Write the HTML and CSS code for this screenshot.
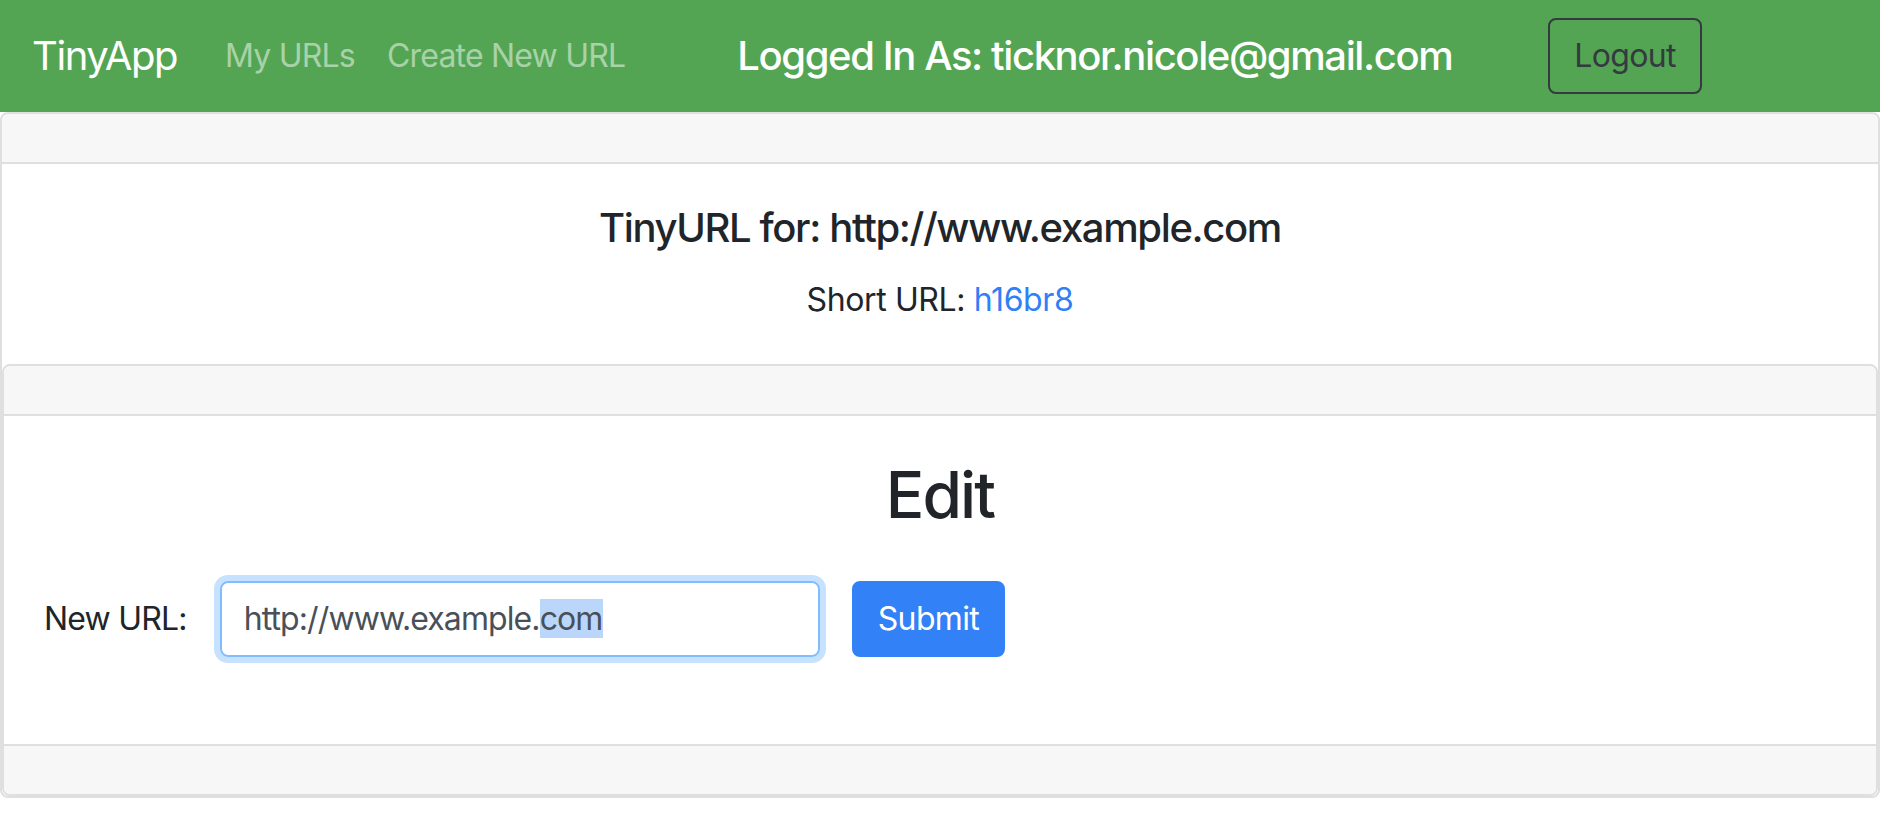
FILE: index.html
```html
<!DOCTYPE html>
<html lang="en">
<head>
<meta charset="utf-8">
<title>TinyApp</title>
<link rel="stylesheet" href="styles.css">
</head>
<body>
<nav class="navbar">
  <a class="brand" href="#">TinyApp</a>
  <ul class="nav">
    <li><a class="nav-link" href="#">My URLs</a></li>
    <li><a class="nav-link" href="#">Create New URL</a></li>
  </ul>
  <h5 class="user">Logged In As: ticknor.nicole@gmail.com</h5>
  <button class="btn-logout" type="button">Logout</button>
</nav>
<main class="card outer">
  <div class="card-header"></div>
  <div class="card-body centered">
    <h5 class="card-title">TinyURL for: http://www.example.com</h5>
    <p class="card-text">Short URL: <a class="link" href="#">h16br8</a></p>
  </div>
  <div class="card inner">
    <div class="card-header"></div>
    <div class="card-body">
      <h2 class="edit-title">Edit</h2>
      <form class="form-inline">
        <label class="form-label">New URL:</label>
        <div class="form-control"><span>http://www.example.</span><span class="sel">com</span></div>
        <button class="btn-primary" type="button">Submit</button>
      </form>
    </div>
    <div class="card-footer"></div>
  </div>
</main>
</body>
</html>
```

FILE: styles.css
```css
* { box-sizing: border-box; }
html, body { margin: 0; padding: 0; }
body {
  font-family: Inter, "Liberation Sans", Arial, sans-serif;
  font-size: 32px;
  line-height: 1.5;
  letter-spacing: -0.012em;
  color: #212529;
  background: #ffffff;
}
.navbar {
  display: flex;
  align-items: center;
  height: 112px;
  padding: 16px 32px;
  background: #53a553;
}
.brand {
  color: #ffffff;
  font-size: 40px;
  line-height: 60px;
  letter-spacing: -0.035em;
  padding: 10px 0;
  margin-right: 32px;
  text-decoration: none;
}
.nav {
  display: flex;
  list-style: none;
  margin: 0;
  padding: 0;
}
.nav-link {
  display: block;
  padding: 16px;
  color: rgba(255, 255, 255, 0.5);
  text-decoration: none;
  font-size: 32px;
  line-height: 48px;
  letter-spacing: -0.025em;
}
.user {
  margin: 0 96px;
  color: #ffffff;
  font-size: 40px;
  font-weight: 500;
  line-height: 48px;
  letter-spacing: -0.035em;
}
.btn-logout {
  font-family: inherit;
  font-size: 32px;
  line-height: 48px;
  letter-spacing: -0.02em;
  padding: 12px 24px;
  color: #343a40;
  background: transparent;
  border: 2px solid #343a40;
  border-radius: 8px;
}
.card {
  display: flex;
  flex-direction: column;
  border: 2px solid #dfdfdf;
  border-radius: 8px;
  background: #ffffff;
}
.card-header {
  height: 50px;
  background: #f7f7f7;
  border-bottom: 2px solid #dfdfdf;
  border-radius: 6px 6px 0 0;
}
.card-footer {
  height: 50px;
  background: #f7f7f7;
  border-top: 2px solid #dfdfdf;
  border-radius: 0 0 6px 6px;
}
.card-body { padding: 40px; }
.centered { text-align: center; }
.card-title {
  margin: 0 0 24px;
  font-size: 40px;
  font-weight: 500;
  line-height: 48px;
  letter-spacing: -0.034em;
}
.card-text { margin: 0; }
.link { color: #2f7ff6; text-decoration: none; }
.edit-title {
  margin: 0 0 16px;
  text-align: center;
  font-size: 64px;
  font-weight: 500;
  line-height: 77px;
  letter-spacing: -0.03em;
}
.form-inline {
  display: flex;
  align-items: center;
  margin: 48px 0 47px;
}
.form-label { margin-right: 33px; letter-spacing: -0.025em; }
.form-control {
  width: 600px;
  height: 76px;
  padding: 12px 24px 12px 22px;
  border: 2px solid #80bdff;
  border-radius: 8px;
  color: #495057;
  line-height: 48px;
  letter-spacing: -0.028em;
  box-shadow: 0 0 0 6px rgba(0, 123, 255, 0.22);
}
.sel { background: #bad6fb; }
.btn-primary {
  margin-left: 32px;
  height: 76px;
  padding: 12px 24px;
  font-family: inherit;
  font-size: 32px;
  line-height: 48px;
  letter-spacing: -0.02em;
  color: #ffffff;
  background: #3381f6;
  border: 2px solid #3381f6;
  border-radius: 8px;
}
```
